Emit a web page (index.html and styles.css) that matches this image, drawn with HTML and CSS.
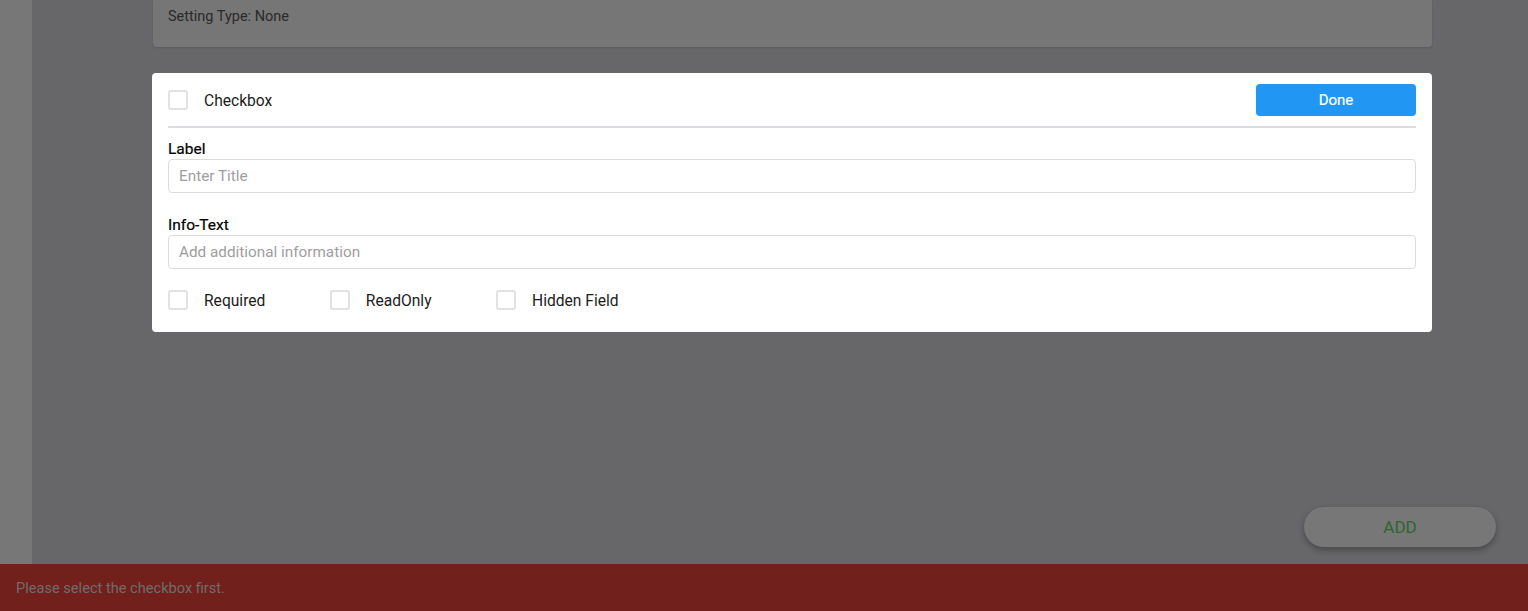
FILE: index.html
```html
<!DOCTYPE html>
<html>
<head>
<meta charset="utf-8">
<link rel="stylesheet" href="styles.css">
</head>
<body>
<div class="app">
  <aside class="side"></aside>
  <main class="main">
    <div class="setting-card">Setting Type: None</div>
    <section class="dialog">
      <div class="dialog-head">
        <label class="check"><span class="box"></span><span class="check-text">Checkbox</span></label>
        <button class="done">Done</button>
      </div>
      <div class="field">
        <div class="field-label">Label</div>
        <div class="input">Enter Title</div>
      </div>
      <div class="field">
        <div class="field-label">Info-Text</div>
        <div class="input">Add additional information</div>
      </div>
      <div class="options">
        <label class="check"><span class="box"></span><span class="check-text">Required</span></label>
        <label class="check"><span class="box"></span><span class="check-text">ReadOnly</span></label>
        <label class="check"><span class="box"></span><span class="check-text">Hidden Field</span></label>
      </div>
    </section>
    <button class="add">ADD</button>
  </main>
</div>
<div class="snackbar">Please select the checkbox first.</div>
</body>
</html>
```

FILE: styles.css
```css
* { box-sizing: border-box; }
html, body { margin: 0; padding: 0; }
body {
  font-family: Roboto, "Noto Sans", sans-serif;
  background: #676769;
  width: 1528px;
  height: 611px;
  overflow: hidden;
}
.app {
  display: flex;
  height: 564px;
}
.side {
  width: 32px;
  background: #777777;
  flex: none;
}
.main {
  flex: 1;
  position: relative;
  padding: 0 0 0 120px;
}
.setting-card {
  width: 1279px;
  height: 47px;
  margin-left: 1px;
  background: #767676;
  border-radius: 0 0 4px 4px;
  padding: 9px 15px 0;
  font-size: 14.5px;
  color: #2a2a2a;
  line-height: 16px;
  box-shadow: 0 1px 2px rgba(0,0,0,0.12);
}
.dialog {
  margin-top: 26px;
  width: 1280px;
  background: #ffffff;
  border-radius: 4px;
  padding: 11px 16px 22px;
}
.dialog-head {
  display: flex;
  align-items: center;
  justify-content: space-between;
  height: 32px;
}
.dialog-head + .field {
  border-top: 2px solid #dcdce0;
  margin-top: 10px;
  padding-top: 12px;
}
.check {
  display: flex;
  align-items: center;
  gap: 16px;
  height: 20px;
}
.box {
  width: 20px;
  height: 20px;
  border: 2px solid #e2e2e2;
  border-radius: 3px;
  background: #fff;
  flex: none;
}
.check-text {
  font-size: 15.6px;
  font-weight: 400;
  line-height: 20px;
  color: #1c1c1c;
  padding-top: 1px;
}
.done {
  width: 160px;
  height: 32px;
  border: none;
  border-radius: 4px;
  background: #2196f3;
  color: #fff;
  font-family: Roboto, sans-serif;
  font-size: 15px;
  font-weight: 400;
  padding-top: 1px;
  -webkit-text-stroke: 0.2px #fff;
}
.field + .field { margin-top: 23px; }
.field-label {
  font-size: 15.5px;
  font-weight: 400;
  color: #000;
  -webkit-text-stroke: 0.2px #000;
  line-height: 18px;
  margin-bottom: 1px;
}
.input {
  height: 34px;
  border: 1px solid #dcdcdc;
  border-radius: 4px;
  padding: 0 10px;
  font-size: 15.3px;
  color: #9e9e9e;
  line-height: 32px;
}
.options {
  display: flex;
  gap: 64.5px;
  margin-top: 21px;
}
.add {
  position: absolute;
  left: 1272px;
  top: 507px;
  width: 192px;
  height: 40px;
  border: none;
  border-radius: 20px;
  background: #777777;
  color: #2d6530;
  font-family: Roboto, sans-serif;
  font-size: 17px;
  box-shadow: 0 3px 6px rgba(0,0,0,0.3);
}
.snackbar {
  height: 47px;
  background: #71201b;
  color: #6d6d6d;
  font-size: 14.6px;
  padding: 1px 16px 0;
  line-height: 46px;
}
```
